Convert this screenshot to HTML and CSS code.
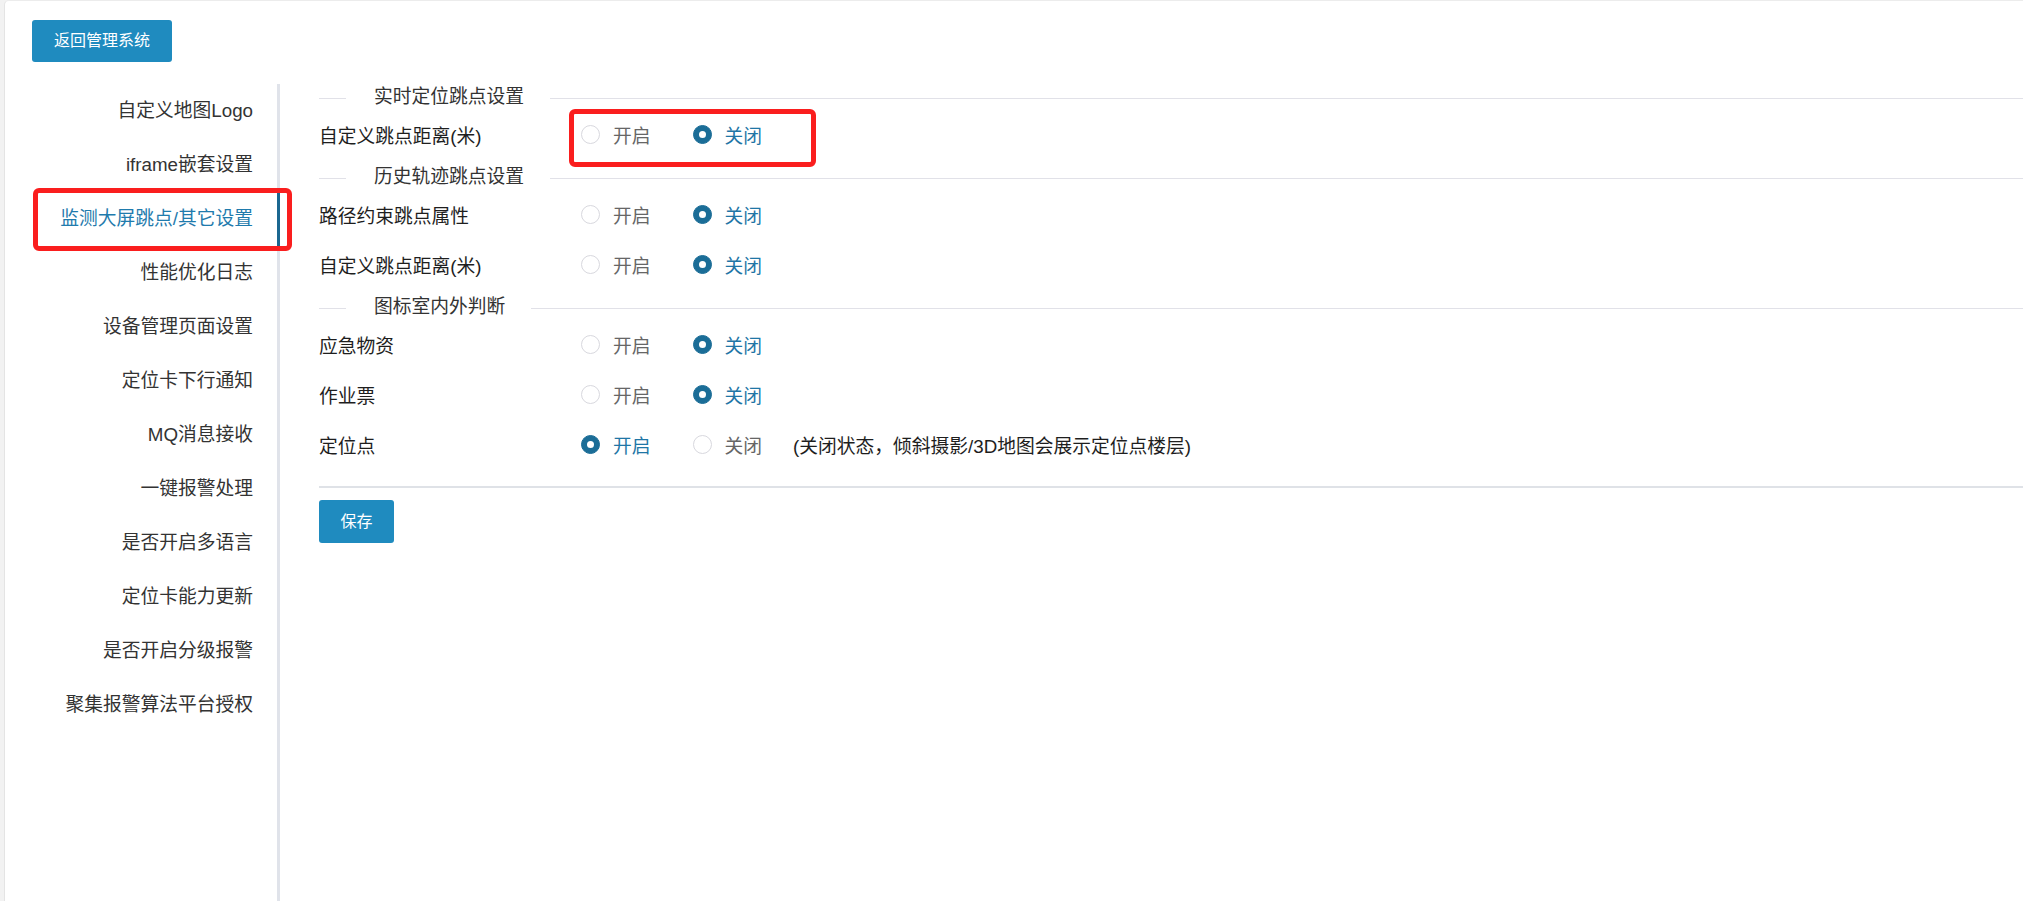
FILE: index.html
```html
<!DOCTYPE html>
<html>
<head>
    <meta charset="utf-8">
    <meta name="viewport" content="width=device-width, initial-scale=1.0">
    <link rel="stylesheet" href="styles.css">
    <title>系统设置</title>
</head>
<body>
    <div class="panel">
        <div class="toolbar">
            <button class="btn btn-back">返回管理系统</button>
        </div>

        <div class="main">
            <ul class="side-menu">
                <li>自定义地图Logo</li>
                <li>iframe嵌套设置</li>
                <li class="active">监测大屏跳点/其它设置</li>
                <li>性能优化日志</li>
                <li>设备管理页面设置</li>
                <li>定位卡下行通知</li>
                <li>MQ消息接收</li>
                <li>一键报警处理</li>
                <li>是否开启多语言</li>
                <li>定位卡能力更新</li>
                <li>是否开启分级报警</li>
                <li>聚集报警算法平台授权</li>
            </ul>

            <div class="content">
                <div class="legend"><span>实时定位跳点设置</span></div>
                <div class="form-row">
                    <label class="form-label">自定义跳点距离(米)</label>
                    <span class="radio"><i></i>开启</span>
                    <span class="radio checked"><i></i>关闭</span>
                </div>

                <div class="legend"><span>历史轨迹跳点设置</span></div>
                <div class="form-row">
                    <label class="form-label">路径约束跳点属性</label>
                    <span class="radio"><i></i>开启</span>
                    <span class="radio checked"><i></i>关闭</span>
                </div>
                <div class="form-row">
                    <label class="form-label">自定义跳点距离(米)</label>
                    <span class="radio"><i></i>开启</span>
                    <span class="radio checked"><i></i>关闭</span>
                </div>

                <div class="legend"><span>图标室内外判断</span></div>
                <div class="form-row">
                    <label class="form-label">应急物资</label>
                    <span class="radio"><i></i>开启</span>
                    <span class="radio checked"><i></i>关闭</span>
                </div>
                <div class="form-row">
                    <label class="form-label">作业票</label>
                    <span class="radio"><i></i>开启</span>
                    <span class="radio checked"><i></i>关闭</span>
                </div>
                <div class="form-row">
                    <label class="form-label">定位点</label>
                    <span class="radio checked"><i></i>开启</span>
                    <span class="radio"><i></i>关闭</span>
                    <span class="hint">(关闭状态，倾斜摄影/3D地图会展示定位点楼层)</span>
                </div>

                <div class="form-divider"></div>
                <button class="btn btn-save">保存</button>
            </div>
        </div>
    </div>

    <!-- red marker frames -->
    <div class="mark mark-menu"></div>
    <div class="mark mark-radio"></div>
</body>
</html>
```

FILE: styles.css
```css
* {
    box-sizing: border-box;
}

html, body {
    margin: 0;
    padding: 0;
    height: 100%;
}

body {
    background-color: #f2f2f2;
    font-family: "Liberation Sans", "Noto Sans CJK SC", sans-serif;
    font-size: 18.75px;
    color: #222;
    overflow: hidden;
}

.panel {
    margin-left: 4px;
    min-height: 100%;
    background-color: #ffffff;
    border-left: 1px solid #e4e4e4;
    border-top: 1px solid #ececec;
    border-top-left-radius: 5px;
}

.toolbar {
    padding: 19px 0 0 27px;
}

.btn {
    display: block;
    height: 42px;
    padding: 0;
    border: none;
    border-radius: 3px;
    background-color: #1f8bbf;
    color: #ffffff;
    font-family: "Liberation Sans", "Noto Sans CJK SC", sans-serif;
    font-size: 16px;
    line-height: 42px;
}

.btn-back {
    width: 140px;
}

.btn-save {
    width: 75px;
    height: 43px;
    margin-top: 12px;
}

.main {
    display: flex;
    align-items: flex-start;
    margin-top: 14px;
}

/* left menu */
.side-menu {
    list-style-type: none;
    margin: 8px 0 0 0;
    padding: 0;
    width: 275px;
    min-height: calc(100vh - 84px);
    border-right: 3px solid #e0e3ea;
}

.side-menu li {
    height: 54px;
    line-height: 54px;
    margin-right: -3px;
    padding-right: 24px;
    text-align: right;
    color: #333;
    border-right: 3px solid transparent;
    white-space: nowrap;
}

.side-menu li.active {
    color: #1f7bad;
    border-right-color: #1b6790;
}

/* form area */
.content {
    flex: 1;
    margin-left: 39px;
}

.legend {
    display: flex;
    align-items: center;
    height: 40px;
    padding-top: 2px;
    color: #333;
}

.legend::before,
.legend::after {
    content: "";
    border-top: 1px solid #e1e1e8;
    margin-top: 2px;
}

.legend::before {
    width: 27px;
}

.legend::after {
    flex: 1;
}

.legend span {
    padding: 0 26px 0 28px;
    line-height: 24px;
}

.form-row {
    display: flex;
    align-items: center;
    height: 40px;
    padding-bottom: 4px;
}

.form-row + .form-row {
    margin-top: 10px;
}

.form-label {
    width: 262px;
    color: #1e1e1e;
}

.radio {
    display: inline-flex;
    align-items: center;
    color: #666;
}

.radio + .radio {
    margin-left: 42px;
}

.radio i {
    display: inline-block;
    width: 19px;
    height: 19px;
    margin-right: 13px;
    border: 1px solid #d8d8de;
    border-radius: 50%;
    position: relative;
}

.radio.checked {
    color: #1f76a6;
}

.radio.checked i {
    background-color: #1b6d97;
    border-color: #1b6d97;
}

.radio.checked i::after {
    content: "";
    position: absolute;
    left: 5px;
    top: 5px;
    width: 7px;
    height: 7px;
    border-radius: 50%;
    background-color: #ffffff;
}

.hint {
    margin-left: 31px;
    color: #1e1e1e;
}

.form-divider {
    margin-top: 20px;
    border-top: 2px solid #dfe2e7;
}

/* red marker frames */
.mark {
    position: absolute;
    border: 5px solid #fa1e1e;
    border-radius: 6px;
}

.mark-menu {
    left: 33px;
    top: 188px;
    width: 259px;
    height: 63px;
}

.mark-radio {
    left: 569px;
    top: 109px;
    width: 247px;
    height: 58px;
}
```
